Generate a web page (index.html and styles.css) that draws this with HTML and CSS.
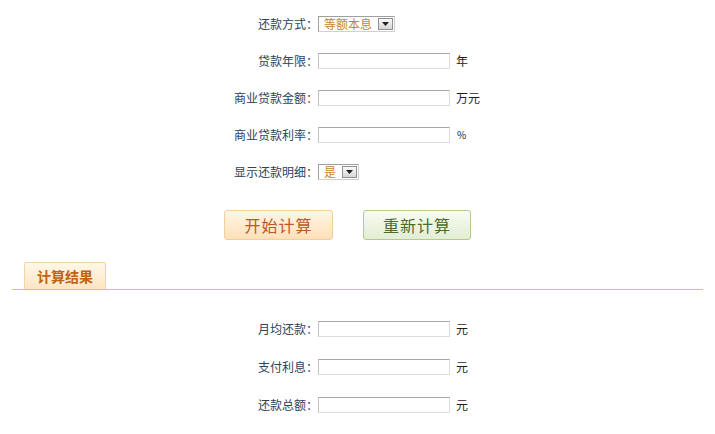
FILE: index.html
```html
<!DOCTYPE html>
<html lang="zh-CN">
<head>
<meta charset="utf-8">
<title>房贷计算器</title>
<link rel="stylesheet" href="styles.css">
</head>
<body>
<div class="page">
  <div class="form">
    <div class="row">
      <div class="label">还款方式：</div>
      <div class="field">
        <div class="select select-wide"><span class="sel-text">等额本息</span><span class="sel-btn"><svg width="7" height="4" viewBox="0 0 7 4"><path d="M0 0 H7 L3.5 4 Z" fill="#222"/></svg></span></div>
      </div>
    </div>
    <div class="row">
      <div class="label">贷款年限：</div>
      <div class="field"><div class="input"></div><span class="unit">年</span></div>
    </div>
    <div class="row">
      <div class="label">商业贷款金额：</div>
      <div class="field"><div class="input"></div><span class="unit">万元</span></div>
    </div>
    <div class="row">
      <div class="label">商业贷款利率：</div>
      <div class="field"><div class="input"></div><span class="unit pct">%</span></div>
    </div>
    <div class="row">
      <div class="label">显示还款明细：</div>
      <div class="field">
        <div class="select select-narrow"><span class="sel-text">是</span><span class="sel-btn"><svg width="7" height="4" viewBox="0 0 7 4"><path d="M0 0 H7 L3.5 4 Z" fill="#222"/></svg></span></div>
      </div>
    </div>
  </div>

  <div class="buttons">
    <div class="btn btn-start">开始计算</div>
    <div class="btn btn-reset">重新计算</div>
  </div>

  <div class="tabbar">
    <div class="tab">计算结果</div>
  </div>

  <div class="form results">
    <div class="row row-r">
      <div class="label">月均还款：</div>
      <div class="field"><div class="input"></div><span class="unit">元</span></div>
    </div>
    <div class="row row-r">
      <div class="label">支付利息：</div>
      <div class="field"><div class="input"></div><span class="unit">元</span></div>
    </div>
    <div class="row row-r">
      <div class="label">还款总额：</div>
      <div class="field"><div class="input"></div><span class="unit">元</span></div>
    </div>
  </div>
</div>
</body>
</html>
```

FILE: styles.css
```css
html, body {
  margin: 0;
  padding: 0;
  background: #ffffff;
}

body {
  font-family: "Noto Sans CJK SC", "Noto Sans", sans-serif;
  font-size: 12px;
  color: #2f3e4e;
}

.page {
  width: 715px;
}

.form {
  padding-top: 5px;
}

.row {
  display: grid;
  grid-template-columns: 318px 1fr;
  height: 37px;
  align-items: center;
}

.row-r {
  height: 38px;
}

.results {
  padding-top: 20px;
}

.label {
  text-align: right;
  color: #2d4358;
  font-size: 12px;
  line-height: 16px;
}

.field {
  display: flex;
  align-items: center;
}

.input {
  width: 130px;
  height: 14px;
  border: 1px solid #dcdcdc;
  border-top-color: #a8a8a8;
  border-left-color: #c4c4c4;
  background: #ffffff;
}

.unit {
  margin-left: 6px;
  color: #1e1e1e;
  font-size: 12px;
  line-height: 16px;
}

.pct {
  font-size: 10px;
  margin-left: 7px;
}

.select {
  display: flex;
  align-items: center;
  height: 14px;
  border: 1px solid #a0a0a0;
  border-right-color: #d0d0d0;
  border-bottom-color: #d0d0d0;
  background: #ffffff;
  padding: 0 1px 0 0;
}

.select-wide {
  width: 74px;
}

.select-narrow {
  width: 38px;
}

.sel-text {
  flex: 1;
  padding-left: 5px;
  color: #c8852e;
  font-size: 12px;
  line-height: 14px;
}

.sel-btn {
  width: 15px;
  height: 12px;
  display: flex;
  align-items: center;
  justify-content: center;
  background: linear-gradient(#fafafa, #d6d6d6);
  border: 1px solid #909090;
  box-sizing: border-box;
}

.buttons {
  display: flex;
  gap: 30px;
  padding-left: 224px;
  margin-top: 20px;
}

.btn {
  height: 30px;
  box-sizing: border-box;
  border-radius: 3px;
  font-size: 16px;
  display: flex;
  align-items: center;
  justify-content: center;
  letter-spacing: 1px;
}

.btn-start {
  width: 109px;
  background: linear-gradient(#fff6e6, #fde0b8);
  border: 1px solid #f2cf9c;
  color: #b9582b;
}

.btn-reset {
  width: 108px;
  background: linear-gradient(#f9fcf2, #e2edd2);
  border: 1px solid #b3c98e;
  color: #4c6a2c;
}

.tabbar {
  margin: 22px 12px 0 12px;
  padding-left: 12px;
  border-bottom: 1px solid #dcc080;
  display: flex;
}

.tab {
  width: 82px;
  height: 27px;
  box-sizing: border-box;
  background: linear-gradient(#fff7e8, #fde5c3);
  border: 1px solid #f0d5a8;
  border-bottom: none;
  border-radius: 2px 2px 0 0;
  color: #c0620f;
  font-weight: bold;
  font-size: 14px;
  display: flex;
  align-items: center;
  justify-content: center;
}
```
